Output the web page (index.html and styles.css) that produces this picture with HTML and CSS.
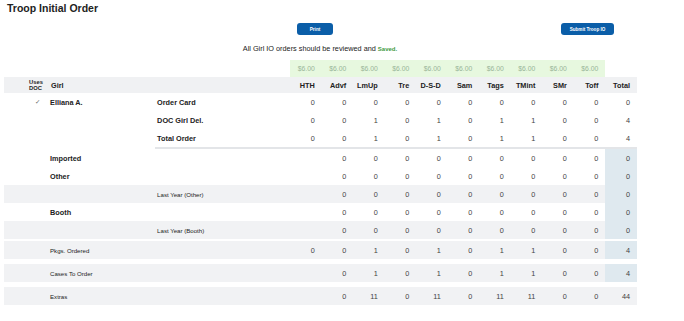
FILE: index.html
```html
<!DOCTYPE html>
<html lang="en">
<head>
  <meta charset="UTF-8" />
  <title>Troop Initial Order</title>
  <link rel="stylesheet" href="styles.css">
</head>
<body>
  <h1>Troop Initial Order</h1>
  <div class="toolbar">
    <button class="btn print">Print</button>
    <button class="btn submit">Submit Troop IO</button>
  </div>
  <p class="notice">All Girl IO orders should be reviewed and <span class="saved">Saved.</span></p>
  <table class="order">
    <colgroup>
      <col class="c-doc"><col class="c-girl"><col class="c-label">
      <col class="c-num"><col class="c-num"><col class="c-num"><col class="c-num"><col class="c-num"><col class="c-num"><col class="c-num"><col class="c-num"><col class="c-num"><col class="c-num"><col class="c-num">
    </colgroup>
    <thead>
      <tr class="prices">
        <td></td><td></td><td></td>
        <td class="price">$6.00</td><td class="price">$6.00</td><td class="price">$6.00</td><td class="price">$6.00</td><td class="price">$6.00</td>
        <td class="price">$6.00</td><td class="price">$6.00</td><td class="price">$6.00</td><td class="price">$6.00</td><td class="price">$6.00</td>
        <td></td>
      </tr>
      <tr class="heads">
        <th class="doc">Uses<br>DOC</th><th class="girl">Girl</th><th></th>
        <th>HTH</th><th>Advf</th><th>LmUp</th><th>Tre</th><th>D-S-D</th><th>Sam</th><th>Tags</th><th>TMint</th><th>SMr</th><th>Toff</th><th>Total</th>
      </tr>
    </thead>
    <tbody>
      <tr>
        <td class="check">✓</td><td class="name">Elliana A.</td><td class="label">Order Card</td>
        <td>0</td><td>0</td><td>0</td><td>0</td><td>0</td><td>0</td><td>0</td><td>0</td><td>0</td><td>0</td><td>0</td>
      </tr>
      <tr>
        <td></td><td></td><td class="label">DOC Girl Del.</td>
        <td>0</td><td>0</td><td>1</td><td>0</td><td>1</td><td>0</td><td>1</td><td>1</td><td>0</td><td>0</td><td>4</td>
      </tr>
      <tr class="sum">
        <td></td><td></td><td class="label">Total Order</td>
        <td>0</td><td>0</td><td>1</td><td>0</td><td>1</td><td>0</td><td>1</td><td>1</td><td>0</td><td>0</td><td>4</td>
      </tr>
      <tr>
        <td></td><td class="name">Imported</td><td></td>
        <td></td><td>0</td><td>0</td><td>0</td><td>0</td><td>0</td><td>0</td><td>0</td><td>0</td><td>0</td><td class="total">0</td>
      </tr>
      <tr>
        <td></td><td class="name">Other</td><td></td>
        <td></td><td>0</td><td>0</td><td>0</td><td>0</td><td>0</td><td>0</td><td>0</td><td>0</td><td>0</td><td class="total">0</td>
      </tr>
      <tr class="shade">
        <td></td><td></td><td class="small">Last Year (Other)</td>
        <td></td><td>0</td><td>0</td><td>0</td><td>0</td><td>0</td><td>0</td><td>0</td><td>0</td><td>0</td><td class="total">0</td>
      </tr>
      <tr>
        <td></td><td class="name">Booth</td><td></td>
        <td></td><td>0</td><td>0</td><td>0</td><td>0</td><td>0</td><td>0</td><td>0</td><td>0</td><td>0</td><td class="total">0</td>
      </tr>
      <tr class="shade">
        <td></td><td></td><td class="small">Last Year (Booth)</td>
        <td></td><td>0</td><td>0</td><td>0</td><td>0</td><td>0</td><td>0</td><td>0</td><td>0</td><td>0</td><td class="total">0</td>
      </tr>
      <tr class="shade gap-s">
        <td></td><td class="small" colspan="2">Pkgs. Ordered</td>
        <td>0</td><td>0</td><td>1</td><td>0</td><td>1</td><td>0</td><td>1</td><td>1</td><td>0</td><td>0</td><td class="total">4</td>
      </tr>
      <tr class="shade gap">
        <td></td><td class="small" colspan="2">Cases To Order</td>
        <td></td><td>0</td><td>1</td><td>0</td><td>1</td><td>0</td><td>1</td><td>1</td><td>0</td><td>0</td><td class="total">4</td>
      </tr>
      <tr class="shade gap">
        <td></td><td class="small" colspan="2">Extras</td>
        <td></td><td>0</td><td>11</td><td>0</td><td>11</td><td>0</td><td>11</td><td>11</td><td>0</td><td>0</td><td>44</td>
      </tr>
    </tbody>
  </table>
</body>
</html>
```

FILE: styles.css
```css
body {
  margin: 0;
  padding: 2px 4px;
  font-family: "Liberation Sans", Arial, sans-serif;
  color: #222;
  background: #fff;
}
h1 {
  margin: 0 0 0 3px;
  font-size: 10.5px;
  line-height: 12px;
  font-weight: bold;
  color: #222;
}
.toolbar {
  display: grid;
  grid-template-columns: 1fr auto 1fr;
  width: 622px;
  margin-top: 9px;
}
.btn {
  height: 12px;
  padding: 0;
  border: none;
  border-radius: 3px;
  background: #0b5ea8;
  color: #fff;
  font-family: "Liberation Sans", Arial, sans-serif;
  font-weight: bold;
  font-size: 4.6px;
}
.print {
  grid-column: 2;
  width: 36px;
}
.submit {
  grid-column: 3;
  justify-self: end;
  width: 53px;
  margin-right: 12px;
}
.notice {
  margin: 9px 0 0 0;
  width: 632px;
  text-align: center;
  font-size: 7.3px;
  line-height: 10px;
  color: #222;
}
.saved {
  color: #3f9a3f;
  font-weight: bold;
  font-size: 6px;
}
.order {
  margin-top: 6px;
  width: 633px;
  table-layout: fixed;
  border-collapse: separate;
  border-spacing: 0;
  font-size: 7.3px;
}
.c-doc { width: 44px; }
.c-girl { width: 107px; }
.c-label { width: 135px; }
.c-num { width: 31.5px; }
.order td, .order th {
  padding: 0 7px 0 0;
  text-align: right;
  white-space: nowrap;
  color: #444;
}
.prices td {
  height: 17px;
}
.price {
  background: #e7f8df;
  color: #98b598 !important;
  font-size: 6.8px;
}
.heads th {
  height: 16px;
  background: #f0f1f3;
  font-weight: bold;
  color: #222;
}
.heads th.doc {
  text-align: left;
  padding-left: 25px;
  font-size: 5.8px;
  line-height: 6.3px;
}
.heads th.girl {
  text-align: left;
  padding-left: 3px;
}
tbody td {
  height: 18px;
}
.order td.check {
  text-align: left;
  padding-left: 31px;
  font-family: "DejaVu Sans", sans-serif;
  font-size: 6.5px;
  color: #666;
}
.order td.name {
  text-align: left;
  padding-left: 2px;
  font-weight: bold;
  color: #222;
}
.order td.label {
  text-align: left;
  padding-left: 2px;
  font-weight: bold;
  color: #222;
}
.order td.small {
  text-align: left;
  padding-left: 2px;
  font-size: 6.1px;
  color: #222;
}
.sum td:nth-child(n+3) {
  border-bottom: 2px solid #e3e5e8;
}
.shade td {
  background: #f1f2f4;
}
.order td.total {
  background: #dfe9ef;
}
.gap-s td {
  border-top: 2px solid #fff;
}
.gap td {
  border-top: 5px solid #fff;
}
```
